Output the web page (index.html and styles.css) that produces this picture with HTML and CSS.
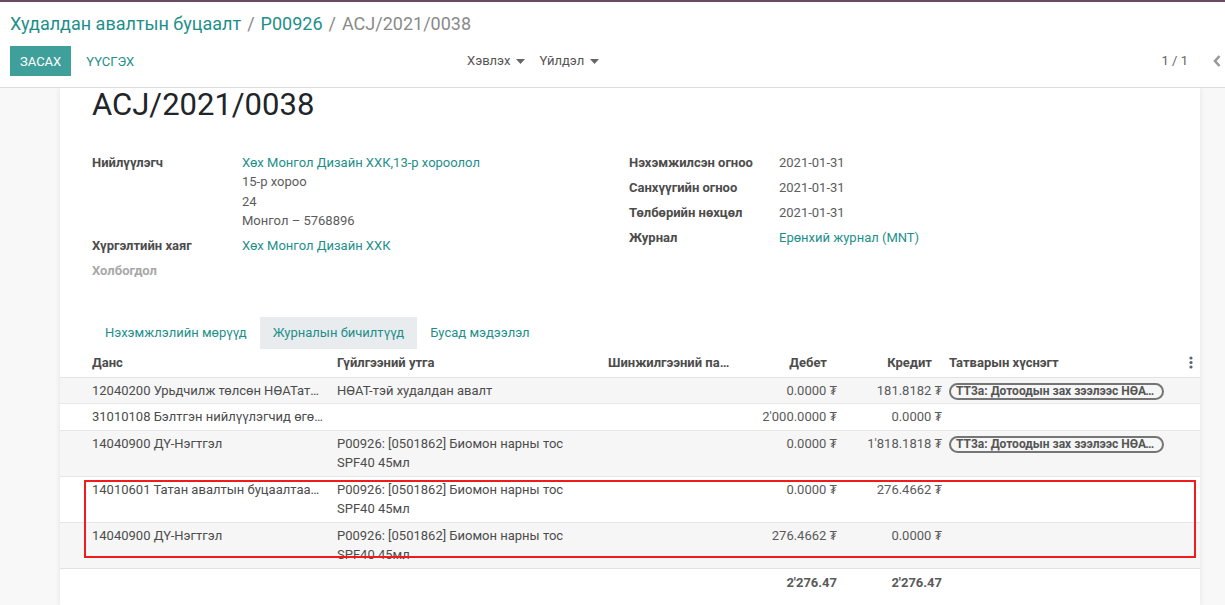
FILE: index.html
```html
<!DOCTYPE html>
<html lang="mn">
<head>
<meta charset="utf-8">
<title>ACJ/2021/0038</title>
<link rel="stylesheet" href="styles.css">
</head>
<body>
<div class="topline"></div>
<header class="cp">
  <div class="crumbs">
    <a href="#">Худалдан авалтын буцаалт</a><span class="sep">/</span><a href="#">P00926</a><span class="sep">/</span><span class="cur">ACJ/2021/0038</span>
  </div>
  <div class="cp-bottom">
    <div class="btns">
      <button class="btn btn-primary">Засах</button>
      <button class="btn btn-link">Үүсгэх</button>
    </div>
    <div class="actions">
      <span class="dd">Хэвлэх <svg width="9" height="5" viewBox="0 0 9 5"><path d="M0 0h9L4.5 5z" fill="#666"/></svg></span>
      <span class="dd">Үйлдэл <svg width="9" height="5" viewBox="0 0 9 5"><path d="M0 0h9L4.5 5z" fill="#666"/></svg></span>
    </div>
    <div class="pager">
      <span>1 / 1</span>
      <svg width="10" height="14" viewBox="0 0 10 14"><path d="M7.5 2 3 7l4.5 5" stroke="#999" stroke-width="2.6" fill="none"/></svg>
    </div>
  </div>
</header>
<main class="content">
  <div class="sheet">
    <h1 class="title">ACJ/2021/0038</h1>
    <div class="groups">
      <div class="grp">
        <div class="row">
          <div class="lbl">Нийлүүлэгч</div>
          <div class="val"><a href="#">Хөх Монгол Дизайн ХХК,13-р хороолол</a><br>15-р хороо<br>24<br>Монгол – 5768896</div>
        </div>
        <div class="row">
          <div class="lbl">Хүргэлтийн хаяг</div>
          <div class="val"><a href="#">Хөх Монгол Дизайн ХХК</a></div>
        </div>
        <div class="row">
          <div class="lbl muted">Холбогдол</div>
          <div class="val"></div>
        </div>
      </div>
      <div class="grp">
        <div class="row"><div class="lbl">Нэхэмжилсэн огноо</div><div class="val">2021-01-31</div></div>
        <div class="row"><div class="lbl">Санхүүгийн огноо</div><div class="val">2021-01-31</div></div>
        <div class="row"><div class="lbl">Төлбөрийн нөхцөл</div><div class="val">2021-01-31</div></div>
        <div class="row"><div class="lbl">Журнал</div><div class="val"><a href="#">Ерөнхий журнал (MNT)</a></div></div>
      </div>
    </div>
    <ul class="tabs">
      <li class="tab">Нэхэмжлэлийн мөрүүд</li>
      <li class="tab active">Журналын бичилтүүд</li>
      <li class="tab">Бусад мэдээлэл</li>
    </ul>
    <table class="lines">
      <colgroup>
        <col class="c1"><col class="c2"><col class="c3"><col class="c4"><col class="c5"><col class="c6"><col class="c7">
      </colgroup>
      <thead>
        <tr>
          <th class="first">Данс</th>
          <th>Гүйлгээний утга</th>
          <th class="ell">Шинжилгээний паараметр</th>
          <th class="num">Дебет</th>
          <th class="num">Кредит</th>
          <th class="tax">Татварын хүснэгт</th>
          <th class="opt"><svg width="4" height="13" viewBox="0 0 4 13"><circle cx="2" cy="2" r="1.6" fill="#5b6470"/><circle cx="2" cy="6.5" r="1.6" fill="#5b6470"/><circle cx="2" cy="11" r="1.6" fill="#5b6470"/></svg></th>
        </tr>
      </thead>
      <tbody>
        <tr>
          <td class="first ell">12040200 Урьдчилж төлсөн НӨАТатвар</td>
          <td>НӨАТ-тэй худалдан авалт</td>
          <td></td>
          <td class="num">0.0000&nbsp;₮</td>
          <td class="num">181.8182&nbsp;₮</td>
          <td class="tax"><span class="tag">ТТ3а: Дотоодын зах зээлээс НӨАТ-тэй</span></td>
          <td></td>
        </tr>
        <tr>
          <td class="first ell">31010108 Бэлтгэн нийлүүлэгчид өгөх өглөг</td>
          <td></td>
          <td></td>
          <td class="num">2'000.0000&nbsp;₮</td>
          <td class="num">0.0000&nbsp;₮</td>
          <td class="tax"></td>
          <td></td>
        </tr>
        <tr>
          <td class="first ell">14040900 ДҮ-Нэгтгэл</td>
          <td>P00926: [0501862] Биомон нарны тос SPF40 45мл</td>
          <td></td>
          <td class="num">0.0000&nbsp;₮</td>
          <td class="num">1'818.1818&nbsp;₮</td>
          <td class="tax"><span class="tag">ТТ3а: Дотоодын зах зээлээс НӨАТ-тэй</span></td>
          <td></td>
        </tr>
        <tr>
          <td class="first ell">14010601 Татан авалтын буцаалтаас олгох</td>
          <td>P00926: [0501862] Биомон нарны тос SPF40 45мл</td>
          <td></td>
          <td class="num">0.0000&nbsp;₮</td>
          <td class="num">276.4662&nbsp;₮</td>
          <td class="tax"></td>
          <td></td>
        </tr>
        <tr>
          <td class="first ell">14040900 ДҮ-Нэгтгэл</td>
          <td>P00926: [0501862] Биомон нарны тос SPF40 45мл</td>
          <td></td>
          <td class="num">276.4662&nbsp;₮</td>
          <td class="num">0.0000&nbsp;₮</td>
          <td class="tax"></td>
          <td></td>
        </tr>
      </tbody>
      <tfoot>
        <tr>
          <td class="first"></td>
          <td></td>
          <td></td>
          <td class="num">2'276.47</td>
          <td class="num">2'276.47</td>
          <td></td>
          <td></td>
        </tr>
      </tfoot>
    </table>
    <div class="mark"></div>
  </div>
</main>
</body>
</html>
```
FILE: styles.css
```css
html, body {
  margin: 0;
  height: 605px;
}
body {
  font-family: Roboto, "Noto Sans", "DejaVu Sans", sans-serif;
  font-size: 13px;
  line-height: 1.5;
  color: #4c4c4c;
  overflow: hidden;
  display: flex;
  flex-direction: column;
  background: #fff;
}
a {
  color: #1d8f8a;
  text-decoration: none;
}
.topline {
  height: 2px;
  background: #6d4a64;
  flex: none;
}
.cp {
  flex: none;
  background: #fff;
  border-bottom: 1px solid #dcdcdc;
  padding: 8px 0 11px;
}
.crumbs {
  padding-left: 10px;
  font-size: 18px;
  line-height: 27px;
  white-space: nowrap;
}
.crumbs .sep {
  color: #888;
  margin: 0 6px;
}
.crumbs .cur {
  color: #8a8a8a;
}
.cp-bottom {
  display: flex;
  align-items: center;
  margin-top: 9px;
  height: 30px;
  padding: 0 3px 0 10px;
}
.btns {
  width: 457px;
  display: flex;
  gap: 5px;
}
.btn {
  font-family: inherit;
  font-size: 13px;
  text-transform: uppercase;
  height: 30px;
  padding: 0 10px;
  border: 0;
  border-radius: 0;
}
.btn-primary {
  background: #3f9f9a;
  color: #fff;
}
.btn-link {
  background: none;
  color: #1d8f8a;
}
.actions {
  flex: 1;
  display: flex;
  gap: 14px;
  color: #555;
}
.dd {
  display: flex;
  align-items: center;
  gap: 6px;
}
.pager {
  display: flex;
  align-items: center;
  gap: 24px;
  color: #666;
}
.content {
  flex: 1;
  min-height: 0;
  background: #f8f8f8;
  overflow: hidden;
  padding: 0 25px 0 60px;
}
.sheet {
  position: relative;
  background: #fff;
  padding: 0 32px;
  min-height: 100%;
  box-shadow: 0 0 6px rgba(0, 0, 0, 0.09);
}
.title {
  margin: 0;
  padding-top: 1px;
  font-size: 31px;
  font-weight: 400;
  line-height: 32px;
  color: #212529;
}
.groups {
  display: flex;
  margin-top: 29px;
}
.grp {
  width: 537px;
}
.row {
  display: grid;
  grid-template-columns: 150px 1fr;
  padding: 2.75px 0;
  line-height: 19.5px;
}
.lbl {
  font-weight: 700;
  color: #4c4c4c;
}
.lbl.muted {
  color: #a8a8a8;
}
.val {
  color: #5c5c5c;
}
.tabs {
  list-style: none;
  margin: 33px 0 0;
  padding: 0;
  display: flex;
}
.tab {
  padding: 6.25px 13px;
  line-height: 19.5px;
  color: #1d8f8a;
}
.tab.active {
  background: #e9ecef;
}
.lines {
  margin: 0 -32px;
  width: 1140px;
  border-collapse: collapse;
  table-layout: fixed;
}
.c1 { width: 271px; }
.c2 { width: 271px; }
.c3 { width: 136px; }
.c4 { width: 105px; }
.c5 { width: 105px; }
.c6 { width: 232px; }
.c7 { width: 20px; }
.lines th {
  font-weight: 700;
  text-align: left;
  padding: 4.25px 6px;
  line-height: 19.5px;
  border-bottom: 1px solid #e2e2e2;
  box-shadow: 0 2px 3px -2px rgba(0, 0, 0, 0.06);
  white-space: nowrap;
}
.lines td {
  padding: 3px 6px;
  line-height: 19.5px;
  border-top: 1px solid #e6e6e6;
  vertical-align: top;
}
.lines tbody tr:nth-child(odd) td {
  background: #f6f6f6;
}
.lines .first {
  padding-left: 32px;
}
.lines .ell {
  white-space: nowrap;
  overflow: hidden;
  text-overflow: ellipsis;
}
.lines .num {
  text-align: right;
  white-space: nowrap;
  color: #5a5a5a;
}
.lines th.num {
  padding-right: 16px;
  color: #4c4c4c;
}
.lines .tax {
  padding-left: 1px;
}
.lines th.opt {
  padding: 0;
  text-align: left;
  vertical-align: middle;
}
.lines th.opt svg {
  display: block;
  margin-left: 9px;
}
.tag {
  display: inline-block;
  box-sizing: border-box;
  max-width: 215px;
  white-space: nowrap;
  overflow: hidden;
  text-overflow: ellipsis;
  border: 2px solid #757575;
  border-radius: 10px;
  padding: 0 5px;
  font-size: 12px;
  font-weight: 700;
  line-height: 13px;
  color: #555;
  vertical-align: middle;
}
.lines tfoot td {
  font-weight: 700;
  padding: 4px 6px;
  border-top: 1px solid #e2e2e2;
  background: #fff;
  color: #4c4c4c;
}
.mark {
  position: absolute;
  left: 24px;
  top: 392px;
  width: 1112px;
  height: 78px;
  box-sizing: border-box;
  border: 2px solid #f01c1c;
  pointer-events: none;
}
```
